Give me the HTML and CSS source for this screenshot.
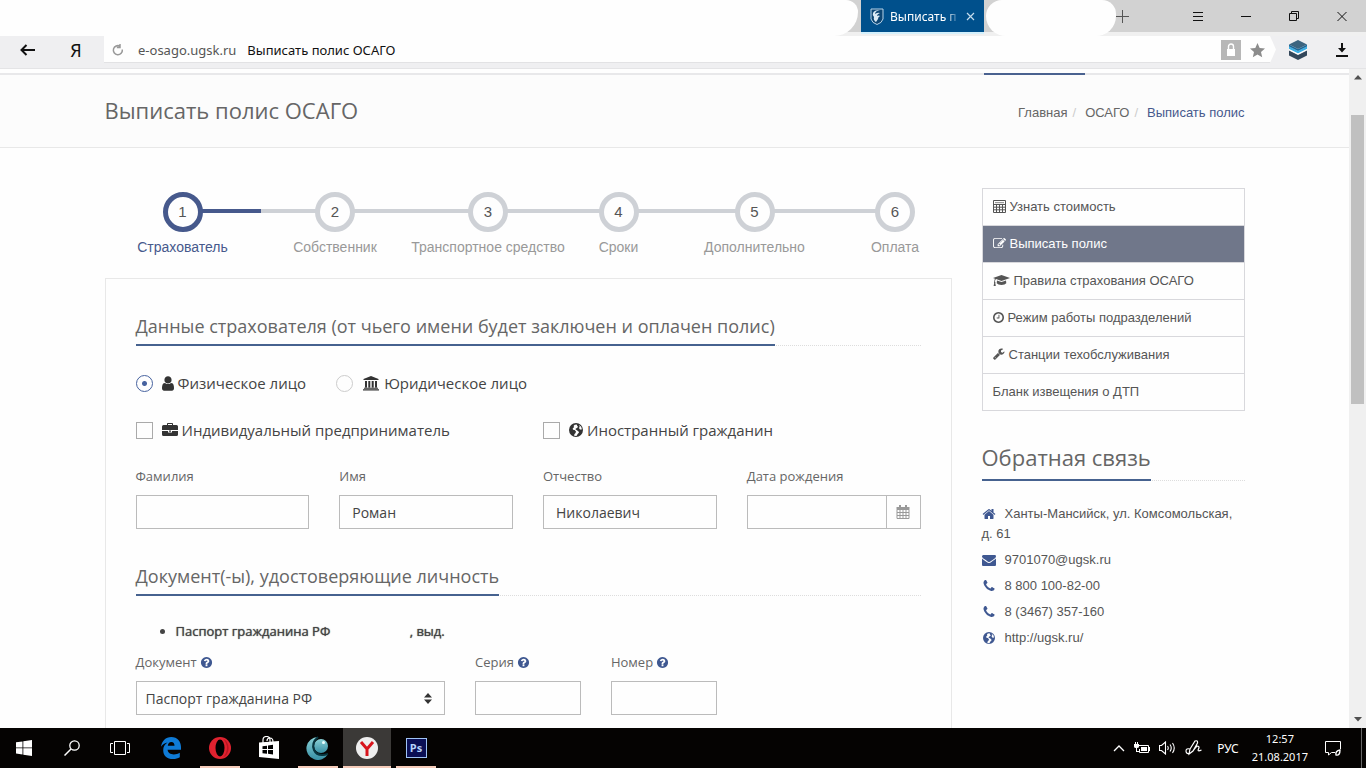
FILE: index.html
```html
<!DOCTYPE html>
<html lang="ru">
<head>
<meta charset="utf-8">
<title>Выписать полис ОСАГО</title>
<link rel="stylesheet" href="styles.css">
</head>
<body>
<svg class="sprite" aria-hidden="true">
  <symbol id="i-question" viewBox="0 0 1792 1792"><path d="M1024 1376v-192q0-14-9-23t-23-9h-192q-14 0-23 9t-9 23v192q0 14 9 23t23 9h192q14 0 23-9t9-23zm256-672q0-88-55.500-163t-138.500-116-170-41q-243 0-371 213-15 24 8 42l132 100q7 6 19 6 16 0 25-12 53-68 86-92 34-24 86-24 48 0 85.500 26t37.500 59q0 38-20 61t-68 45q-63 28-115.500 86.500t-52.500 125.500v36q0 14 9 23t23 9h192q14 0 23-9t9-23q0-19 21.500-49.500t54.500-49.500q32-18 49-28.500t46-35 44.500-48 28-60.500 12.500-81zm384 192q0 209-103 385.500t-279.500 279.500-385.500 103-385.500-103-279.500-279.500-103-385.500 103-385.500 279.500-279.500 385.500-103 385.500 103 279.500 279.500 103 385.500z"/></symbol>
  <symbol id="i-phone" viewBox="0 0 1792 1792"><path d="M1600 1240q0 27-10 70.500t-21 68.500q-21 50-122 106-94 51-186 51-27 0-53-3.500t-57.500-12.500-47-14.500-55.500-20.500-49-18q-98-35-175-83-127-79-264-216t-216-264q-48-77-83-175-3-9-18-49t-20.500-55.500-14.500-47-12.500-57.500-3.500-53q0-92 51-186 56-101 106-122 25-11 68.500-21t70.500-10q14 0 21 3 18 6 53 76 11 19 30 54t35 63.500 31 53.500q3 4 17.500 25t21.500 35.500 7 28.500q0 20-28.500 50t-62 55-62 53-28.500 46q0 9 5 22.500t8.500 20.500 14 24 11.500 19q76 137 174 235t235 174q2 1 19 11.500t24 14 20.500 8.500 22.500 5q18 0 46-28.500t53-62 55-62 50-28.500q14 0 28.500 7t35.500 21.500 25 17.500q25 15 53.500 31t63.500 35 54 30q70 35 76 53 3 7 3 21z"/></symbol>
  <symbol id="i-globe" viewBox="0 0 14 14"><path fill-rule="evenodd" d="M7 1a6 6 0 1 1 0 12A6 6 0 0 1 7 1zM7.600 2.300L6 2.500 5 3.300 5.300 4.600 4.200 5.400 4.400 6.800 5.800 7 7 8.200 6.600 9.600 5.600 10.600 5.400 12 7.400 12.200 8.400 10.400 9.600 9.200 9 8 7.400 7 6.400 6.200 7.400 5.400 8.800 4.400 8 3.400zM9.400 2.600L10.200 4 9.600 5.200 10.200 6.400 11.400 6.800 12 6.200 11.400 4.200z"/></symbol>
</svg>

<header class="tabstrip">
  <div class="tab-blank tab-blank-wide"></div>
  <div class="tab">
    <svg width="14" height="17" viewBox="0 0 14 17"><path d="M1 1h12v10q-1 4-6 5.500Q2 15 1 11z" fill="#0d4674" stroke="#b7d3e8"/><path d="M10 2Q5 3 5 6q3-2 5-1-3 1-3 3 2-1 3 0-2 1-2 3l-2 3Q3 12 4 9 2 7 3 5q1-3 7-3z" fill="#dcebf5"/></svg>
    <span class="tab-title">Выписать п</span>
    <button class="plain" aria-label="Закрыть вкладку"><svg width="9" height="9" viewBox="0 0 9 9"><path d="M1 1l7 7M8 1l-7 7" stroke="#c5dcec" stroke-width="1.200"/></svg></button>
  </div>
  <div class="tab-blank"></div>
  <button class="plain tab-new" aria-label="Новая вкладка"><svg width="13" height="13" viewBox="0 0 13 13"><path d="M6.500 0v13M0 6.500h13" stroke="#555"/></svg></button>
  <div class="window-buttons">
    <button class="plain" aria-label="Меню"><svg width="11" height="11" viewBox="0 0 11 11"><path d="M0 1.500h10M0 5.500h10M0 9.500h10" stroke="#111"/></svg></button>
    <button class="plain" aria-label="Свернуть"><svg width="11" height="11" viewBox="0 0 11 11"><path d="M0 5.500h10" stroke="#111"/></svg></button>
    <button class="plain" aria-label="Развернуть"><svg width="11" height="11" viewBox="0 0 11 11"><path d="M2.500 2.500v-2h7v7h-2M.5 2.500h7v7h-7z" fill="none" stroke="#111"/></svg></button>
    <button class="plain" aria-label="Закрыть"><svg width="11" height="11" viewBox="0 0 11 11"><path d="M.5 1l9 9M9.500 1l-9 9" stroke="#111"/></svg></button>
  </div>
</header>

<div class="toolbar">
  <button class="plain tool-back" aria-label="Назад"><svg width="16" height="12" viewBox="0 0 16 12"><path d="M15 6H2M6.500 1L1.500 6l5 5" fill="none" stroke="#111" stroke-width="2"/></svg></button>
  <button class="plain tool-ya">Я</button>
  <div class="address">
    <button class="plain" aria-label="Обновить"><svg width="12" height="12" viewBox="0 0 12 12"><path d="M10.300 5.500A4.500 4.500 0 1 1 8 2.200M8 0v3.500H4.800" fill="none" stroke="#999" stroke-width="1.500"/></svg></button>
    <span class="host">e-osago.ugsk.ru</span>
    <span class="page-name">Выписать полис ОСАГО</span>
    <span class="lock"><svg width="20" height="20" viewBox="0 0 20 20"><path fill="#b7b7b7" d="M0 0h20v20H0z"/><path fill="#fff" d="M6 9h8v7H6z"/><path d="M7.500 9V6.500a2.500 2.500 0 0 1 5 0V9" fill="none" stroke="#fff" stroke-width="1.400"/></svg></span>
    <button class="plain" aria-label="В закладки"><svg width="15" height="15" viewBox="0 0 15 15"><path fill="#8c8c8c" d="M7.500 0l2.200 5 5.300.5-4 3.500 1.200 5.300-4.700-2.800-4.700 2.800L4 9 0 5.500 5.300 5z"/></svg></button>
  </div>
  <button class="plain tool-stack" aria-label="Расширение"><svg width="20" height="20" viewBox="0 0 20 20"><path fill="#33475b" d="M1 10.500l9 4.500 9-4.500v5L10 20l-9-4.500z"/><path fill="#3bb0e6" d="M1 6.500L10 11l9-4.500V9l-9 4.500L1 9z"/><path fill="#1c6b9d" d="M1 4.500L10 9l9-4.500v2L10 11 1 6.500z"/><path fill="#3d6580" d="M10 0l9 4.500L10 9 1 4.500z"/><path d="M1 9.500l9 4.500 9-4.500" fill="none" stroke="#fff"/></svg></button>
  <button class="plain" aria-label="Загрузки"><svg width="12" height="14" viewBox="0 0 12 14"><path d="M6 0v8" stroke="#111" stroke-width="2"/><path fill="#111" d="M2 5h8L6 9.500zM0 12h12v2H0z"/></svg></button>
</div>

<div class="viewport">
  <div class="page">
    <div class="nav-edge"><div class="container"><div class="nav-active"></div></div></div>
    <div class="page-head">
      <div class="container">
        <h1>Выписать полис ОСАГО</h1>
        <nav class="crumbs"><a href="#">Главная</a><i>/</i><a href="#">ОСАГО</a><i>/</i><a href="#" class="current">Выписать полис</a></nav>
      </div>
    </div>

    <div class="container columns">
      <main>
        <ol class="steps">
          <li class="active"><span class="num">1</span><a href="#">Страхователь</a></li>
          <li><span class="num">2</span><a href="#">Собственник</a></li>
          <li><span class="num">3</span><a href="#">Транспортное средство</a></li>
          <li><span class="num">4</span><a href="#">Сроки</a></li>
          <li><span class="num">5</span><a href="#">Дополнительно</a></li>
          <li><span class="num">6</span><a href="#">Оплата</a></li>
        </ol>

        <form class="panel">
          <div class="headline"><h2>Данные страхователя (от чьего имени будет заключен и оплачен полис)</h2></div>

          <div class="choices kinds">
            <label><input type="radio" name="kind" checked>
              <svg width="12" height="15" viewBox="256 96 1280 1600"><path d="M1536 1399q0 109-62.500 187t-150.500 78h-854q-88 0-150.500-78t-62.500-187q0-85 8.500-160.500t31.500-152 58.500-131 94-89 134.500-34.500q131 128 313 128t313-128q76 0 134.500 34.500t94 89 58.500 131 31.500 152 8.500 160.500zm-256-887q0 159-112.500 271.500t-271.500 112.500-271.500-112.500-112.500-271.500 112.500-271.500 271.500-112.500 271.500 112.500 112.500 271.500z"/></svg>
              Физическое лицо</label>
            <label><input type="radio" name="kind">
              <svg width="18" height="15" viewBox="0 0 18 15"><path d="M9 0l7.500 3v1h-15V3zM3 5h2v6.500H3zm3.300 0h2v6.500h-2zM9.700 5h2v6.500h-2zM13 5h2v6.500h-2zM2 11.700h14v1H2zM1 13.300h16v1.200H1z"/></svg>
              Юридическое лицо</label>
          </div>

          <div class="choices flags">
            <label><input type="checkbox">
              <svg width="16" height="14" viewBox="0 0 16 14"><path fill-rule="evenodd" d="M5 2V.8Q5 0 5.800 0h4.400q.8 0 .8.800V2h3.500Q16 2 16 3.500V7H0V3.500Q0 2 1.500 2zm1 0h4V1H6zM0 8h6v1.500h4V8h6v3.500q0 1.500-1.500 1.500h-13Q0 13 0 11.500zM7 7.500h2v1.200H7z"/></svg>
              Индивидуальный предприниматель</label>
            <label><input type="checkbox">
              <svg width="14" height="14" viewBox="1 1 12 12"><use href="#i-globe" width="14" height="14"/></svg>
              Иностранный гражданин</label>
          </div>

          <div class="row names">
            <div class="field w3"><label for="last">Фамилия</label><input id="last" type="text"></div>
            <div class="field w3"><label for="first">Имя</label><input id="first" type="text" value="Роман"></div>
            <div class="field w3"><label for="middle">Отчество</label><input id="middle" type="text" value="Николаевич"></div>
            <div class="field w3"><label for="birth">Дата рождения</label>
              <div class="with-addon"><input id="birth" type="text"><button type="button" aria-label="Календарь"><svg width="14" height="15" viewBox="0 0 14 15"><path d="M1 4.500h12v9H1zM1 7.500h12M1 10.500h12M4 4v10M7 4v10M10 4v10" fill="none" stroke="#999"/><path fill="#999" d="M.5 2h13v2.500H.5zM3 0h2v3H3zm6 0h2v3H9z"/></svg></button></div></div>
          </div>

          <div class="headline"><h2>Документ(-ы), удостоверяющие личность</h2></div>
          <ul class="documents"><li>Паспорт гражданина РФ <span class="issued">, выд.</span></li></ul>

          <div class="row">
            <div class="field w5"><label for="doc">Документ <svg class="help"><use href="#i-question"/></svg></label>
              <div class="select"><select id="doc"><option>Паспорт гражданина РФ</option></select><svg width="8" height="11" viewBox="0 0 8 11"><path fill="#333" d="M4 0l4 4.500H0zM4 11l4-4.500H0z"/></svg></div></div>
            <div class="field w2"><label for="series">Серия <svg class="help"><use href="#i-question"/></svg></label><input id="series" type="text"></div>
            <div class="field w2"><label for="number">Номер <svg class="help"><use href="#i-question"/></svg></label><input id="number" type="text"></div>
          </div>
        </form>
      </main>

      <aside>
        <nav class="side-menu">
          <a href="#"><svg width="13" height="13" viewBox="0 0 13 13"><path d="M.5.5h12v12H.5zM.5 4.500h12M.5 7.200h12M.5 9.800h12M3.500 4.500v8M6.500 4.500v8M9.500 4.500v8" fill="none" stroke="#555"/><path d="M2 2h9v1.200H2z" fill="#999"/></svg>Узнать стоимость</a>
          <a href="#" class="current"><svg width="13" height="13" viewBox="0 100 1792 1600"><path d="M888 1184l116-116-152-152-116 116v56h96v96h56zm440-720q-16-16-33 1l-350 350q-17 17-1 33t33-1l350-350q17-17 1-33zm80 594v190q0 119-84.500 203.500t-203.500 84.500h-832q-119 0-203.500-84.500t-84.500-203.500v-832q0-119 84.500-203.500t203.500-84.500h832q63 0 117 25 15 7 18 23 3 17-9 29l-49 49q-14 14-32 8-23-6-45-6h-832q-66 0-113 47t-47 113v832q0 66 47 113t113 47h832q66 0 113-47t47-113v-126q0-13 9-22l64-64q15-15 35-7t20 29zm-96-738l288 288-672 672h-288v-288zm444 132l-92 92-288-288 92-92q28-28 68-28t68 28l152 152q28 28 28 68t-28 68z"/></svg>Выписать полис</a>
          <a href="#"><svg width="17" height="13" viewBox="0 0 17 13"><path d="M8.500 1L17 4 8.500 7 3 5.100Q2 5.700 2 7.500q.8.500.3 1.500L2.800 12H.6L1.200 9Q.6 8 1.300 7.500q0-1.800.7-2.700L0 4zM4 6.500L8.500 8 13 6.500l.3 2.700Q12 11 8.500 11T3.700 9.200z"/></svg>Правила страхования ОСАГО</a>
          <a href="#"><svg width="11" height="11" viewBox="128 128 1536 1536"><path d="M1024 544v448q0 14-9 23t-23 9h-320q-14 0-23-9t-9-23v-64q0-14 9-23t23-9h224v-352q0-14 9-23t23-9h64q14 0 23 9t9 23zm416 352q0-148-73-273t-198-198-273-73-273 73-198 198-73 273 73 273 198 198 273 73 273-73 198-198 73-273zm224 0q0 209-103 385.500t-279.500 279.500-385.500 103-385.500-103-279.500-279.500-103-385.500 103-385.500 279.500-279.500 385.500-103 385.500 103 279.500 279.500 103 385.500z"/></svg>Режим работы подразделений</a>
          <a href="#"><svg width="12" height="12" viewBox="64 64 1728 1728"><path d="M448 1472q0-26-19-45t-45-19-45 19-19 45 19 45 45 19 45-19 19-45zm644-420l-682 682q-37 37-90 37-52 0-91-37l-106-108q-38-36-38-90 0-53 38-91l681-681q39 98 114.500 173.500t173.500 114.500zm634-435q0 39-23 106-47 134-164.500 217.500t-258.500 83.500q-185 0-316.500-131.500t-131.500-316.500 131.500-316.500 316.500-131.500q58 0 121.500 16.500t107.500 46.500q16 11 16 28t-16 28l-293 169v224l193 107q5-3 79-48.500t135.500-81 70.500-35.500q15 0 23.500 10t8.500 25z"/></svg>Станции техобслуживания</a>
          <a href="#">Бланк извещения о ДТП</a>
        </nav>

        <div class="headline side-headline"><h2>Обратная связь</h2></div>
        <ul class="contacts">
          <li><svg viewBox="0 0 1792 1792"><path d="M1472 992v480q0 26-19 45t-45 19h-384v-384h-256v384h-384q-26 0-45-19t-19-45v-480q0-1 .5-3t.5-3l575-474 575 474q1 2 1 6zm223-69l-62 74q-8 9-21 11h-3q-13 0-21-7l-692-577-692 577q-12 8-24 7-13-2-21-11l-62-74q-8-10-7-23.500t11-21.500l719-599q32-26 76-26t76 26l244 204v-195q0-14 9-23t23-9h192q14 0 23 9t9 23v408l219 182q10 8 11 21.500t-7 23.500z"/></svg>Ханты-Мансийск, ул. Комсомольская, д. 61</li>
          <li><svg viewBox="0 0 1792 1792"><path d="M1792 710v794q0 66-47 113t-113 47h-1472q-66 0-113-47t-47-113v-794q44 49 101 87 362 246 497 345 57 42 92.500 65.500t94.500 48 110 24.500h2q51 0 110-24.500t94.500-48 92.500-65.500q170-123 498-345 57-39 100-87zm0-294q0 79-49 151t-122 123q-376 261-468 325-10 7-42.500 31t-54 38.500-52 32.500-57.500 27-50 9h-2q-23 0-50-9t-57.500-27-52-32.500-54-38.500-42.500-31q-91-64-262-182.500t-205-142.500q-62-42-117-115.500t-55-136.500q0-78 41.500-130t118.500-52h1472q65 0 112.500 47t47.500 113z"/></svg><a href="#">9701070@ugsk.ru</a></li>
          <li><svg><use href="#i-phone"/></svg>8 800 100-82-00</li>
          <li><svg><use href="#i-phone"/></svg>8 (3467) 357-160</li>
          <li><svg><use href="#i-globe"/></svg><a href="#">http://ugsk.ru/</a></li>
        </ul>
      </aside>
    </div>
  </div>
  <div class="scrollbar">
    <svg width="8" height="5" viewBox="0 0 8 5"><path fill="#505050" d="M0 4.500L4 0l4 4.500z"/></svg>
    <div class="track"><div class="thumb"></div></div>
    <svg width="8" height="5" viewBox="0 0 8 5"><path fill="#505050" d="M0 0h8L4 4.500z"/></svg>
  </div>
</div>

<footer class="taskbar">
  <button class="plain" aria-label="Пуск"><svg width="16" height="16" viewBox="0 0 16 16"><path fill="#fff" d="M0 2.300L6.500 1.400v6.100H0zM7.300 1.300L16 0v7.500H7.300zM0 8.300h6.500v6.200L0 13.600zM7.300 8.300H16V16l-8.700-1.300z"/></svg></button>
  <button class="plain" aria-label="Поиск"><svg width="16" height="16" viewBox="0 0 16 16"><circle cx="10.500" cy="5.500" r="4.700" fill="none" stroke="#fff" stroke-width="1.300"/><path d="M7 9L.5 15.500" stroke="#fff" stroke-width="1.500"/></svg></button>
  <button class="plain" aria-label="Представление задач"><svg width="20" height="14" viewBox="0 0 20 14"><path d="M4.500.5h11v13h-11zM3 2.500H.5v9H3M17 2.500h2.500v9H17" fill="none" stroke="#fff"/></svg></button>
  <div class="pinned">
    <button class="plain" aria-label="Edge"><svg width="20" height="22" viewBox="0 0 20 22"><path fill="#0f7bd6" d="M0 9.800C.8 4 4.600 0 10.300 0 16.500 0 20 4.600 20 10v2.800H6.600c.2 3.200 2.900 4.600 6.200 4.600 2.300 0 4.200-.6 6-1.700v4.500C16.900 21.300 14.700 22 12 22 6 22 2.200 18.600 2.200 13.200c0-3.300 1.500-6 4.400-7.600C4.200 6.100 1.800 7.200 0 9.800zm6.800-1h6.700c0-2.200-1-3.800-3.200-3.800-2 0-3.200 1.600-3.500 3.800z"/></svg></button>
    <button class="plain running" aria-label="Opera"><svg width="22" height="22" viewBox="0 0 22 22"><ellipse cx="11" cy="11" rx="11" ry="11" fill="#e0222f"/><path fill="#a90f1d" d="M14 1.400A11 11 0 0 1 14 20.600Q18 16 18 11T14 1.400z" opacity=".7"/><ellipse cx="11" cy="11" rx="4.500" ry="8.500" fill="#000"/></svg></button>
    <button class="plain" aria-label="Магазин"><svg width="22" height="24" viewBox="0 0 22 24"><path d="M5 7V4q0-3.500 3.500-3.500T12 4v3M9 5q0-3 3-3t3 4" fill="none" stroke="#fff" stroke-width="1.200"/><path fill="#fff" d="M1 6.500L21 5v18l-20-2z"/><path fill="#000" d="M4.500 10.300l4.500-.6V13H4.500zM10 9.500l5-.7V13h-5zM4.500 14H9v3.700l-4.500-.5zM10 14h5v4.500l-5-.7z"/></svg></button>
    <button class="plain running" aria-label="Браузер"><svg width="24" height="24" viewBox="0 0 24 24"><defs><linearGradient id="moon" x2="0" y2="1"><stop stop-color="#8ad0d5"/><stop offset="1" stop-color="#3790a5"/></linearGradient></defs><path fill="url(#moon)" d="M12 1A11.500 11.500 0 1 0 22 18 9.500 9.500 0 0 1 12 1z"/><circle cx="15" cy="10" r="7" fill="url(#moon)"/><circle cx="17.500" cy="6.500" r="1.500" fill="#eff"/><path d="M12 1Q5 7 8 14t14 4" fill="none" stroke="#073640" stroke-width="2"/></svg></button>
    <button class="plain running focused" aria-label="Яндекс.Браузер"><svg width="24" height="24" viewBox="0 0 24 24"><circle cx="12" cy="12" r="11" fill="#eee"/><path d="M6 6l6 7 6-7M12 12.500V20" fill="none" stroke="#d8141c" stroke-width="3"/></svg></button>
    <button class="plain running" aria-label="Photoshop"><span class="ps">Ps</span></button>
  </div>
  <div class="tray">
    <svg width="12" height="8" viewBox="0 0 12 8"><path d="M1 7l5-5 5 5" fill="none" stroke="#fff" stroke-width="1.300"/></svg>
    <svg width="16" height="12" viewBox="0 0 16 12"><path d="M4.500 3.500h10v7h-9V7M15.500 5v4" fill="none" stroke="#fff"/><path fill="#fff" d="M7 5h6v4H7zM0 2h5v2.500Q5 6 3 6v3h3v1H2V6Q0 6 0 4.500zM1 0h1v2H1zm2 0h1v2H3z"/></svg>
    <svg width="17" height="14" viewBox="0 0 17 14"><path d="M.5 4.500h2L6.500 1v12L2.500 9.500h-2zM8.500 5q1.500 2 0 4M11 3.500q2.500 3.500 0 7M13.500 2q3.500 5 0 10" fill="none" stroke="#fff" stroke-width="1.100"/></svg>
    <svg width="17" height="16" viewBox="0 0 17 16"><path d="M5 9l5-8q3-1 2.500 2L8 11l-4 3zM5 9Q1 8 1 11t4 3M8 11q2-3 4-5 3 0 1.500 3t3 1" fill="none" stroke="#fff" stroke-width="1.200"/></svg>
    <span class="lang">РУС</span>
    <time class="clock">12:57<br>21.08.2017</time>
    <svg width="17" height="17" viewBox="0 0 17 17"><path d="M10 12.500H6.500L3.500 15v-2.500h-3v-11h15V9" fill="none" stroke="#fff"/><path d="M15 10q-5 1-4 5 4 1 4-5z" fill="none" stroke="#fff" stroke-width="1.400"/></svg>
    <div class="desktop-edge"></div>
  </div>
</footer>
</body>
</html>
```
FILE: styles.css
```css
* { box-sizing: border-box; }

body {
  margin: 0;
  height: 100vh;
  display: flex;
  flex-direction: column;
  overflow: hidden;
  background: #fefefe;
  color: #555;
  font-family: "Liberation Sans", Arial, sans-serif;
  font-size: 13px;
}

a { color: inherit; text-decoration: none; }
h1, h2 { margin: 0; font-family: "Open Sans", sans-serif; font-weight: 400; color: #666; }
ul, ol { margin: 0; padding: 0; list-style: none; }
svg { display: block; flex: none; }
.sprite { position: absolute; width: 0; height: 0; }

.plain {
  display: flex;
  align-items: center;
  justify-content: center;
  padding: 0;
  border: 0;
  background: none;
  color: inherit;
  font: inherit;
}

/* Browser tab strip */
.tabstrip {
  display: flex;
  flex: none;
  height: 36px;
  background: linear-gradient(#d2d2d2 32px, #f0f0f0 32px);
}
.tab-blank { width: 130px; height: 36px; margin: 0 6px 0 2px; background: #fefefe; border-radius: 16px 14px 20px 20px; }
.tab-blank-wide { flex: 1; width: auto; margin: 0 3px 0 0; border-radius: 0 12px 24px 0; }
.tab {
  display: flex;
  align-items: center;
  gap: 6px;
  width: 123px;
  height: 34px;
  padding: 0 9px;
  background: #00508c;
  border-bottom: 2px solid #d4f0fc;
  color: #fff;
  font-family: "Noto Sans", sans-serif;
  font-size: 12px;
}
.tab-title {
  flex: 1;
  white-space: nowrap;
  -webkit-mask-image: linear-gradient(90deg, #000 80%, transparent);
  mask-image: linear-gradient(90deg, #000 80%, transparent);
}
.tab-new { width: 13px; height: 32px; margin-left: -6px; }
.window-buttons { display: flex; margin-left: 45px; }
.window-buttons button { width: 48px; height: 32px; }

/* Browser toolbar */
.toolbar {
  display: flex;
  align-items: center;
  flex: none;
  height: 33px;
  padding: 0 18px 5px 20px;
  background: #efeff1;
  border-bottom: 1px solid #e4e4e6;
}
.tool-back { width: 16px; }
.tool-ya { width: 24px; margin: 0 16px 0 28px; color: #111; font: 18px "Noto Sans", sans-serif; }
.address {
  display: flex;
  flex: 1;
  align-items: center;
  align-self: stretch;
  padding: 2px 11px 0 8px;
  background: #fefefe;
  border-bottom: 1px solid #e2e2e4;
  clip-path: polygon(0 0, calc(100% - 6px) 0, 100% 50%, calc(100% - 6px) 100%, 0 100%);
  font-family: "Noto Sans", sans-serif;
}
.host { margin: 0 11px 0 14px; color: #555; }
.page-name { flex: 1; color: #111; }
.lock { margin-right: 9px; }
.tool-stack { margin: 0 28px 0 12px; }

/* Visible part of the site */
.viewport { display: flex; flex: 1; min-height: 0; overflow: hidden; }
.page { flex: 1; min-width: 0; }
.container { display: flex; max-width: 1140px; margin: 0 auto; }
.nav-edge { height: 6px; border-bottom: 2px solid #e8e8ea; }
.nav-edge .container { justify-content: flex-end; }
.nav-active { width: 101px; height: 6px; margin-right: 160px; border-bottom: 2px solid #4a6290; }
.page-head { padding: 16px 0; background: #fcfcfc; border-bottom: 1px solid #e8e8e8; }
.page-head .container { align-items: center; justify-content: space-between; }
.page-head h1 { padding-bottom: 2px; font-size: 22px; line-height: 38px; }
.crumbs { display: flex; gap: 5px; padding-top: 2px; color: #666; }
.crumbs i { color: #ccc; font-style: normal; margin-right: 4px; }
.crumbs .current { color: #46598c; }

.columns { gap: 30px; padding-top: 40px; }
main { flex: 847; min-width: 0; }
aside { flex: 263; min-width: 0; }

/* Progress steps */
.steps { display: grid; grid-template-columns: 156fr 149fr 157fr 104fr 168fr 113fr; padding-top: 4px; }
.steps li {
  display: flex;
  flex-direction: column;
  align-items: center;
  gap: 6px;
  background: linear-gradient(#ced1d6, #ced1d6) 0 17px / 100% 4px no-repeat;
  color: #999;
  font-size: 14px;
  line-height: 18px;
  white-space: nowrap;
}
.steps li:first-child { background-position: 100% 17px; background-size: 50% 4px; }
.steps li:last-child { background-size: 50% 4px; }
.steps .active { background-image: linear-gradient(#46598c, #46598c); color: #46598c; }
.num {
  display: flex;
  align-items: center;
  justify-content: center;
  width: 40px;
  height: 40px;
  border: 5px solid #ced1d6;
  border-radius: 50%;
  background: #fefefe;
  color: #555;
  font-size: 15px;
}
.active .num { border-color: #46598c; }

/* Form panel */
.panel { margin-top: 22px; padding: 32px 30px 30px; border: 1px solid #e8e8e8; }
.headline { display: flex; border-bottom: 1px dotted #ddd; }
.headline h2 { margin-bottom: -1px; padding-bottom: 3px; border-bottom: 2px solid #46628f; font-size: 18px; line-height: 30px; white-space: nowrap; }

.choices { font: 15px/20px "Open Sans", sans-serif; color: #444; }
.choices label { display: flex; align-items: center; }
.choices svg { margin: 0 4px 0 9px; fill: #333; }
.choices input { appearance: none; flex: none; width: 17px; height: 17px; margin: 0; border: 1px solid #aaa; background: #fefefe; }
.choices input[type="radio"] { border-color: #ccc; border-radius: 50%; }
.choices input[type="radio"]:checked { border-color: #46629f; background: radial-gradient(circle, #46629f 2px, #fefefe 3px); }
.kinds { display: flex; gap: 30px; margin: 27px 0; }
.flags { display: grid; grid-template-columns: 1fr 1fr; column-gap: 30px; margin-bottom: 27px; }

.row { display: grid; grid-template-columns: repeat(12, minmax(0, 1fr)); column-gap: 30px; }
.names { margin-bottom: 32px; }
.w2 { grid-column: span 2; }
.w3 { grid-column: span 3; }
.w5 { grid-column: span 5; }
.field label { display: flex; align-items: center; gap: 3px; margin-bottom: 10px; color: #666; font: 13px/18px "Open Sans", sans-serif; white-space: nowrap; }
.field input, .field select {
  appearance: none;
  width: 100%;
  height: 34px;
  padding: 0 12px;
  border: 1px solid #bbb;
  border-radius: 0;
  background: #fefefe;
  color: #444;
  font: 14px "Open Sans", sans-serif;
}
.field select { padding: 0 9px; }
.help { width: 13px; height: 13px; fill: #3f5891; }
.with-addon { display: flex; }
.with-addon input { flex: 1; min-width: 0; }
.with-addon button { display: flex; align-items: center; justify-content: center; width: 34px; padding: 0; border: 1px solid #bbb; border-left: 0; background: #fefefe; }
.select { position: relative; }
.select svg { position: absolute; right: 13px; top: 12px; pointer-events: none; }

.documents { margin: 25px 0 12px; padding-left: 40px; list-style: disc; color: #444; font: 13px/20px "Open Sans", sans-serif; text-shadow: 0 0 1px #444; }
.issued { margin-left: 76px; }

/* Sidebar */
.side-menu { display: flex; flex-direction: column; border: 1px solid #d8d8dc; }
.side-menu a { display: flex; align-items: center; gap: 4px; height: 37px; padding: 0 10px 2px; border-bottom: 1px solid #d8d8dc; fill: #555; }
.side-menu a:last-child { height: 36px; border-bottom: 0; }
.side-menu .current { background: #70778a; color: #fff; fill: #fff; }
.side-headline { margin: 30px 0 23px; }
.side-headline h2 { padding-bottom: 6px; font-size: 22px; line-height: 32px; }
.contacts { line-height: 20px; }
.contacts li { margin-bottom: 6px; }
.contacts svg { display: inline-block; width: 14px; height: 14px; margin-right: 9px; vertical-align: -3px; fill: #3f5891; }

/* Scrollbar */
.scrollbar { display: flex; flex-direction: column; align-items: center; width: 17px; padding: 6px 0; background: #f0f0f0; }
.track { flex: 1; width: 13px; padding-top: 35px; }
.thumb { height: 48%; background: #c0c0c0; }

/* Taskbar */
.taskbar { display: flex; flex: none; height: 40px; background: #050302; color: #fff; font: 12px "Noto Sans", sans-serif; }
.taskbar button { position: relative; width: 48px; height: 40px; }
.pinned { display: flex; gap: 1px; margin-left: 3px; }
.running::after { content: ""; position: absolute; left: 4px; right: 4px; bottom: 0; height: 2px; background: #f5cbb9; }
.focused { background: #3b3937; }
.focused::after { left: 0; right: 0; }
.ps { width: 21px; height: 20px; border: 1px solid #9fc3f5; background: #0a0f55; color: #b5d3fb; font: bold 11px/17px "Open Sans", sans-serif; }
.tray { display: flex; align-items: center; margin-left: auto; }
.tray > svg { margin-right: 9px; }
.tray > .lang { margin: 0 13px 0 6px; }
.clock { margin-right: 17px; font-size: 11px; line-height: 18px; text-align: center; }
.tray > .desktop-edge { align-self: stretch; width: 5px; margin-left: 10px; border-left: 1px solid #666; }
```
